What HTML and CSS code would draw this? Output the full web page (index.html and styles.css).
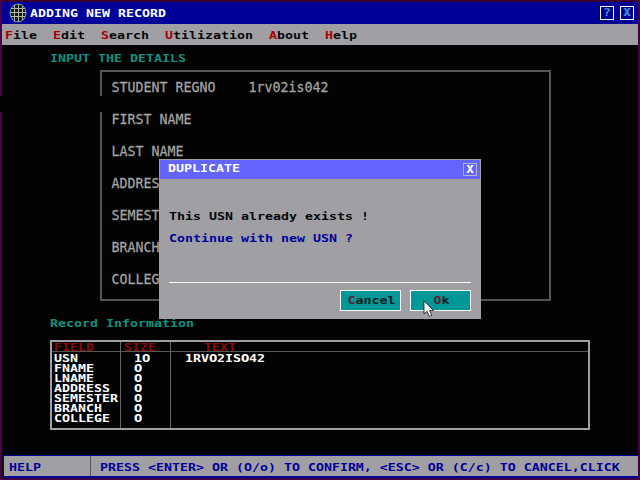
FILE: index.html
```html
<!DOCTYPE html>
<html lang="en">
<head>
<meta charset="utf-8">
<title>Adding New Record</title>
<link rel="stylesheet" href="styles.css">
</head>
<body>
<div class="screen">
  <header class="titlebar">
    <svg class="globe" width="18" height="20" viewBox="0 0 18 20" fill="none" stroke="#b0b49c">
      <ellipse cx="9" cy="10" rx="8" ry="9" fill="#101820" stroke="#62aab5"/>
      <path d="M5.5 2v16M9.5 1v18M13.5 3v14M2 5.5h14M1 9.5h16M2 13.5h14"/>
    </svg>
    <h1 class="t">ADDING NEW RECORD</h1>
    <div class="tools"><span class="tool"><b class="t">?</b></span><span class="tool"><b class="t tall">x</b></span></div>
  </header>
  <nav class="menu">
    <span class="t"><i>F</i>ile</span><span class="t"><i>E</i>dit</span><span class="t"><i>S</i>earch</span><span class="t"><i>U</i>tilization</span><span class="t"><i>A</i>bout</span><span class="t"><i>H</i>elp</span>
  </nav>
  <main class="main">
    <h2 class="t caption">INPUT THE DETAILS</h2>
    <section class="form">
      <div class="row"><label>STUDENT REGNO</label><span>1rv02is042</span></div>
      <div class="row"><label>FIRST NAME</label></div>
      <div class="row"><label>LAST NAME</label></div>
      <div class="row"><label>ADDRESS</label></div>
      <div class="row"><label>SEMESTER</label></div>
      <div class="row"><label>BRANCH</label></div>
      <div class="row"><label>COLLEGE</label></div>
    </section>
    <h2 class="t caption second">Record Information</h2>
    <section class="grid">
      <div class="col fields">
        <div class="head"><span class="t">FIELD</span></div>
        <div class="t">USN</div><div class="t">FNAME</div><div class="t">LNAME</div><div class="t">ADDRESS</div><div class="t">SEMESTER</div><div class="t">BRANCH</div><div class="t">COLLEGE</div>
      </div>
      <div class="col sizes">
        <div class="head"><span class="t">SIZE</span></div>
        <div class="t">1<s>0</s></div><div class="t"><s>0</s></div><div class="t"><s>0</s></div><div class="t"><s>0</s></div><div class="t"><s>0</s></div><div class="t"><s>0</s></div><div class="t"><s>0</s></div>
      </div>
      <div class="col texts">
        <div class="head"><span class="t">TEXT</span></div>
        <div class="t">1RV<s>0</s>2IS<s>0</s>42</div>
      </div>
    </section>
  </main>
  <footer class="status">
    <div class="mode"><span class="t">HELP</span></div>
    <div class="hint"><span class="t">PRESS &lt;ENTER&gt; OR (O/o) TO CONFIRM, &lt;ESC&gt; OR (C/c) TO CANCEL,CLICK</span></div>
  </footer>
</div>
<div class="gap"></div>
<div class="dialog">
  <div class="dialog-title"><span class="t">DUPLICATE</span><span class="close"><b class="t tall">x</b></span></div>
  <div class="dialog-body">
    <p class="t">This USN already exists !</p>
    <p class="t question">Continue with new USN ?</p>
    <div class="buttons">
      <button><span class="t"><i>C</i>ancel</span></button>
      <button><span class="t"><i>O</i>k</span></button>
    </div>
  </div>
</div>
<svg class="pointer" width="12" height="18" viewBox="0 0 12 18"><path d="M1 .8V14l3-2.7L6.4 16.4 8.8 15.3 6.6 10.6H10.6Z" fill="#fff" stroke="#222" stroke-width=".9"/></svg>
</body>
</html>
```
FILE: styles.css
```css
* { box-sizing: border-box; margin: 0; padding: 0; }
body {
  position: relative;
  width: 640px;
  height: 480px;
  overflow: hidden;
  background: #030303;
  font: bold 13.29px/14px "DejaVu Sans Mono", "Liberation Mono", monospace;
}
i, s { font-style: normal; text-decoration: none; }
/* Zero without the inner dot */
s { font-family: "DejaVu Sans Condensed", "DejaVu Sans", sans-serif; font-stretch: condensed; letter-spacing: -.32px; }

/* Squat 8x8 system lettering */
.t { display: block; white-space: pre; font-size: 13.29px; font-weight: bold; transform: scaleY(.77); }
.tall { transform: translateY(-1px); }

.screen {
  display: flex;
  flex-direction: column;
  height: 480px;
  border: 2px solid #430043;
  border-top-color: #3c0030;
  border-left-color: #4b004b;
}
.titlebar {
  display: flex;
  align-items: center;
  height: 22px;
  padding: 0 4px 0 7px;
  background: #000099;
  color: #fff;
}
.globe { margin-right: 3px; }
.titlebar h1 { margin-top: 1px; }
.tools { display: flex; gap: 6px; margin-left: auto; }
.tool {
  display: flex;
  align-items: center;
  justify-content: center;
  width: 14px;
  height: 14px;
  border: 1px solid #fff;
  color: #3b93cf;
}
.menu {
  display: flex;
  align-items: center;
  gap: 16px;
  height: 21px;
  padding: 2px 0 0 3px;
  background: #a0a0a4;
  color: #080808;
}
.menu i { color: #a80000; }

.main { flex: 1; padding: 7px 0 0 48px; }
.caption { color: #109080; }
.form {
  width: 451px;
  height: 231px;
  margin: 4px 0 0 50px;
  border: 2px solid #555;
  color: #a4a4a4;
}
.row {
  display: flex;
  align-items: center;
  height: 32px;
  padding-left: 9.5px;
  font-weight: normal;
  -webkit-text-stroke: .25px #a4a4a4;
  transform: scaleY(1.08);
}
.row label { width: 137px; }
.second { margin-top: 16px; }

.grid {
  display: grid;
  grid-template-columns: 68px 50px 1fr;
  width: 540px;
  height: 90px;
  margin-top: 9px;
  border: 2px solid #a0a0a4;
  color: #fff;
}
.col { border-left: 1px solid #666; line-height: 10px; }
.fields { border-left: 0; }
.col > .t { height: 10px; padding-left: 2px; }
.sizes > .t { padding-left: 13px; }
.texts > .t { padding-left: 14px; }
.head {
  height: 10px;
  margin-bottom: 2px;
  padding: 1px 0 0 2px;
  border-bottom: 1px solid #555;
  color: #8c0808;
  overflow: hidden;
}
.sizes .head { padding-left: 3px; }
.texts .head { padding-left: 33px; }

.status {
  display: flex;
  height: 23px;
  margin: 0 0 0 1px;
  border: 1px solid #000099;
  border-right: 0;
  border-bottom-width: 2px;
  background: #a0a0a4;
  color: #000099;
}
.mode, .hint { display: flex; align-items: center; padding-top: 3px; }
.mode { width: 87px; padding-left: 5px; border-right: 1px solid #555; }
.hint { padding-left: 9px; }

/* Unpainted strip across the window edge and the form frame */
.gap { position: absolute; left: 0; top: 96px; width: 104px; height: 16px; background: #030303; }

.dialog {
  position: absolute;
  left: 159px;
  top: 159px;
  width: 322px;
  height: 160px;
  border: 1px solid #a0a0a4;
  background: #a0a0a4;
  color: #080808;
}
.dialog-title {
  display: flex;
  justify-content: space-between;
  height: 19px;
  padding: 1px 3px 0 8px;
  background: #6464ff;
  color: #fff;
}
.close {
  display: flex;
  align-items: center;
  justify-content: center;
  width: 14px;
  height: 13px;
  margin-top: 2px;
  border: 1px solid #b4b4c8;
}
.dialog-body { padding: 31px 9px 0; }
.question { margin-top: 8px; color: #000099; }
.buttons {
  display: flex;
  justify-content: flex-end;
  gap: 9px;
  margin-top: 36px;
  padding-top: 7px;
  border-top: 1px solid #fff;
}
button {
  display: flex;
  align-items: center;
  justify-content: center;
  width: 61px;
  height: 21px;
  border: 1px solid #fff;
  background: #009898;
  color: #082020;
  font: inherit;
}
button .t { padding-left: 2px; }
button i { color: #5c2030; }
.pointer { position: absolute; left: 423px; top: 300px; }
```
